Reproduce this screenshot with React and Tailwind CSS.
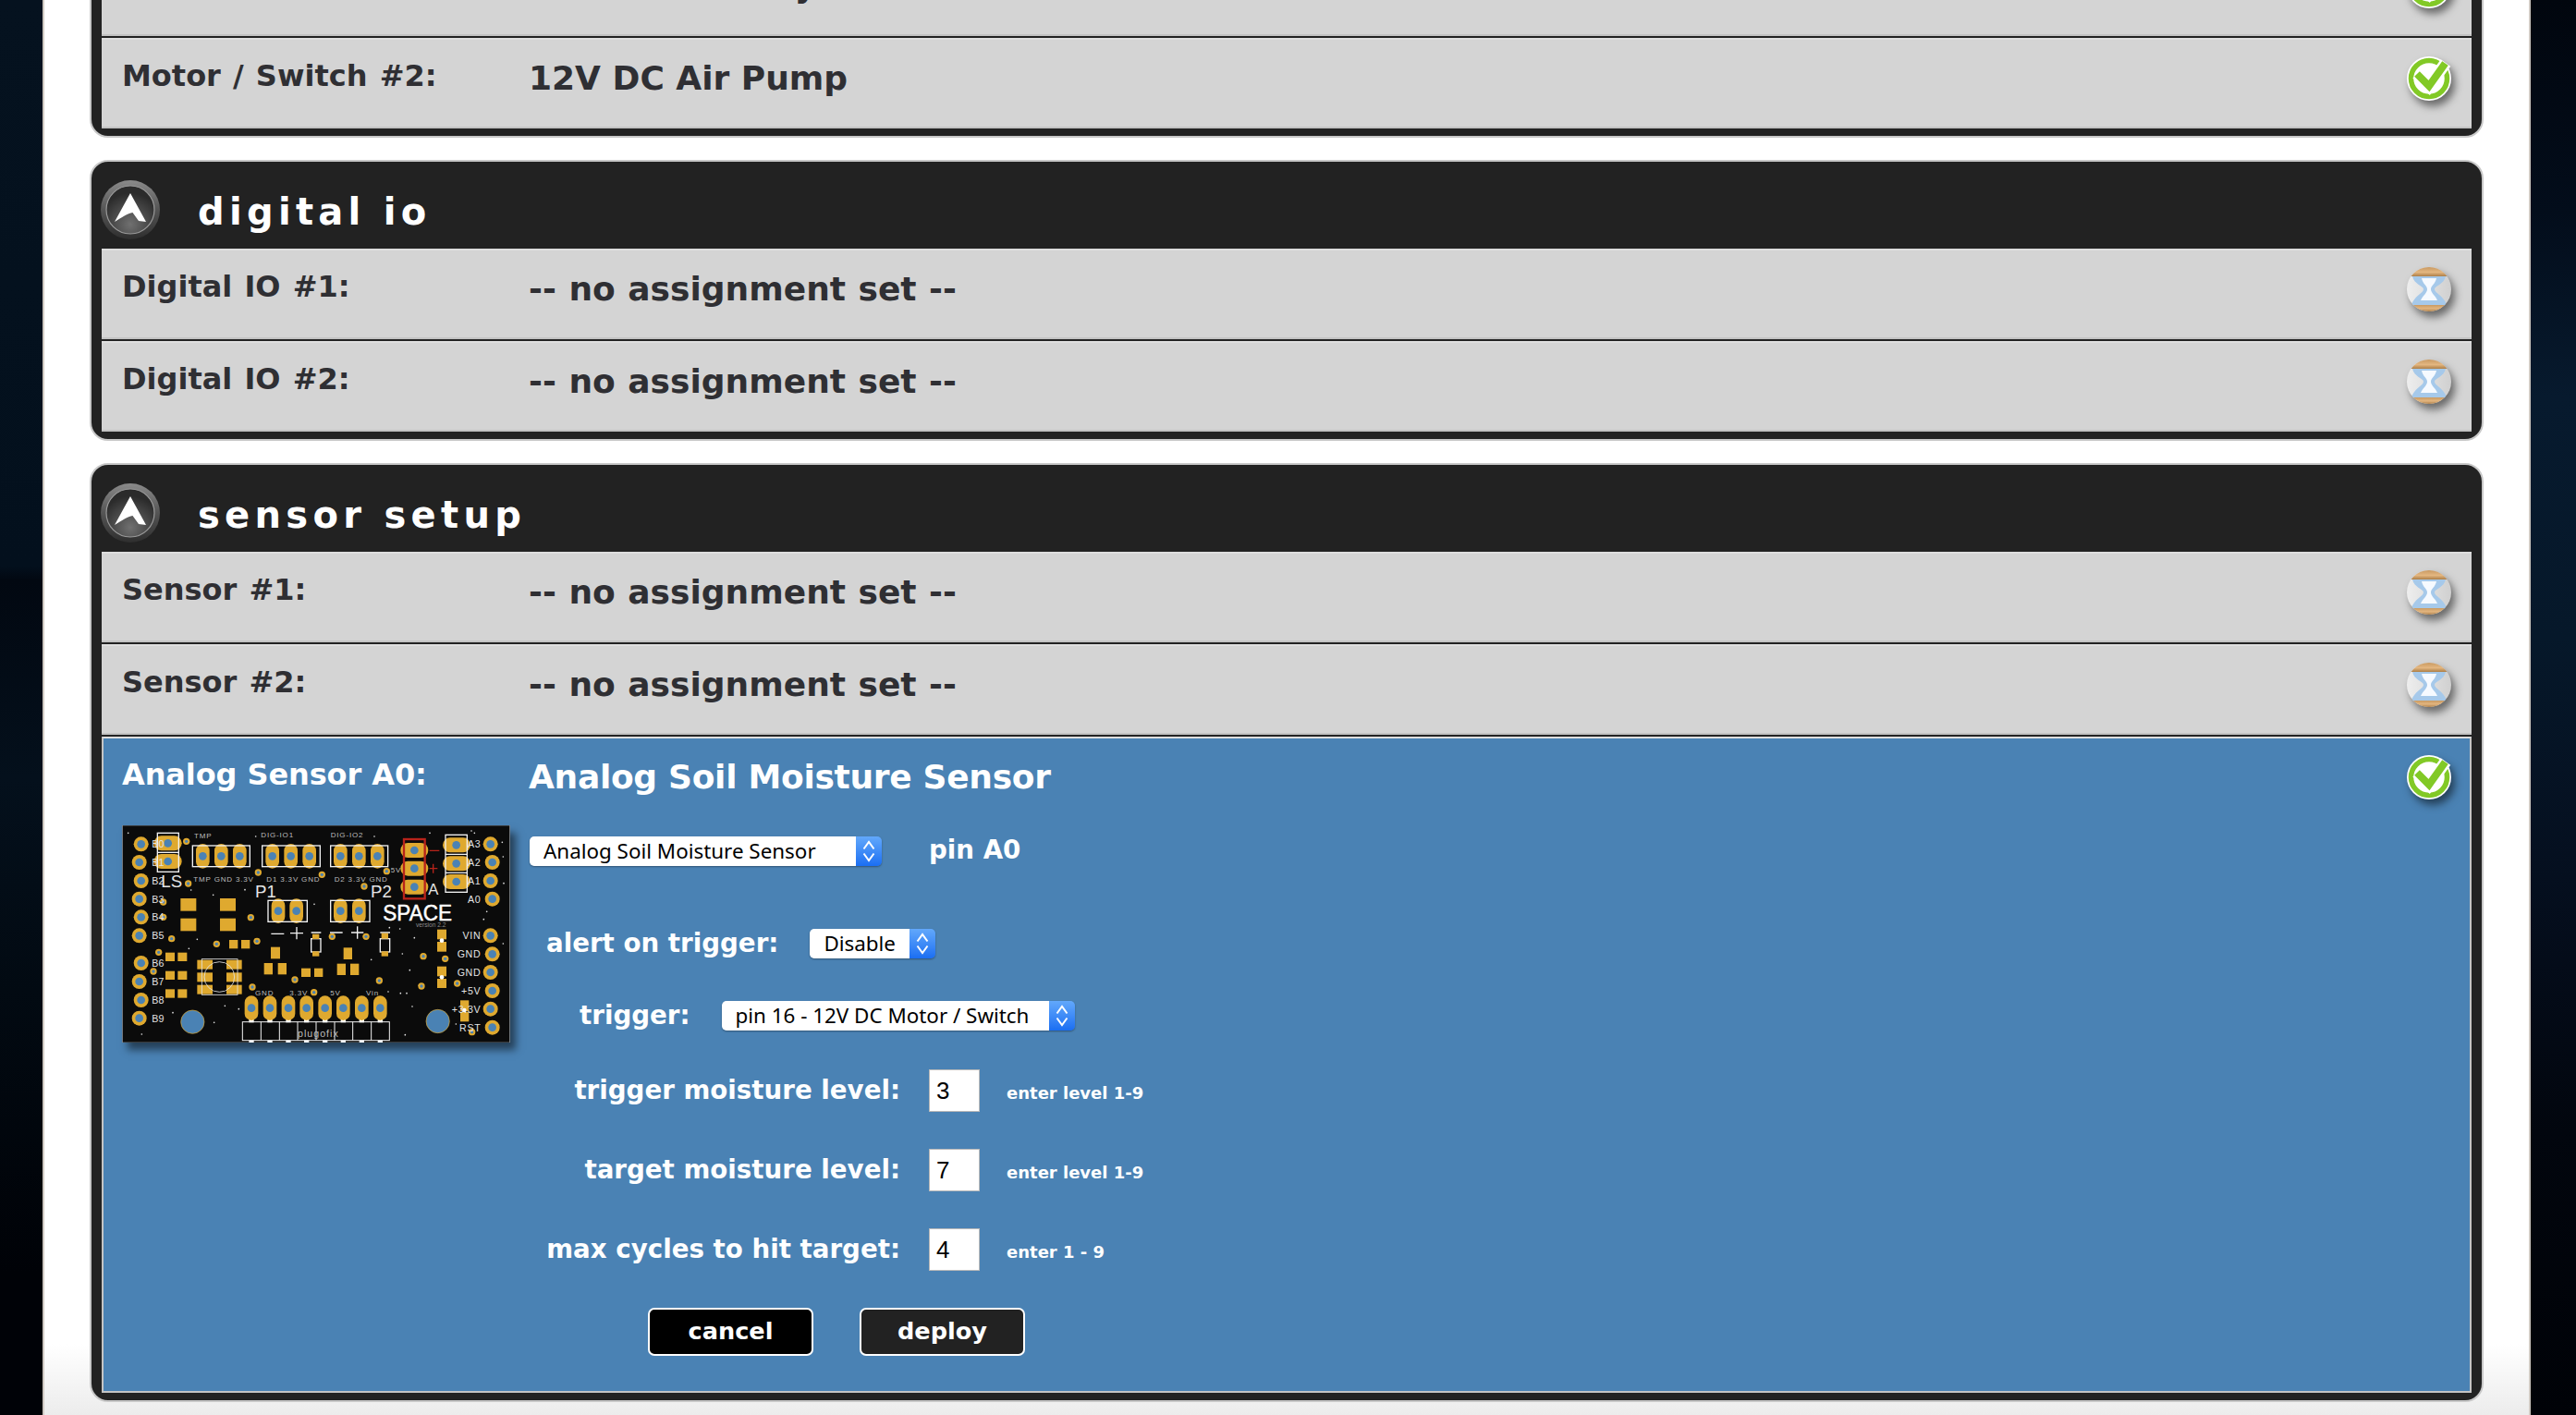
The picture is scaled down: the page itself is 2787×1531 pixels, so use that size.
import React from 'react';

const font = "font-['DejaVu_Sans','Liberation_Sans',sans-serif]";

const LogoBadge = () => (
    <svg width="64" height="64" viewBox="0 0 64 64" className="shrink-0">
        <defs>
            <radialGradient id="badgeFill" cx="50%" cy="80%" r="65%">
                <stop offset="0%" stopColor="#707070" />
                <stop offset="100%" stopColor="#2b2b2b" />
            </radialGradient>
            <linearGradient id="badgeRim" x1="0" y1="0" x2="0" y2="1">
                <stop offset="0%" stopColor="#8a8a8a" />
                <stop offset="50%" stopColor="#555555" />
                <stop offset="100%" stopColor="#2e2e2e" />
            </linearGradient>
        </defs>
        <circle cx="32" cy="32" r="32" fill="url(#badgeRim)" />
        <circle cx="32" cy="32" r="26" fill="url(#badgeFill)" stroke="#9a9a9a" strokeWidth="1.2" />
        <path d="M32 14 L49 45 L41 44 L34.500 35 C29 36 23 40 15 45 Z" fill="#ffffff" />
    </svg>
);

const CheckIcon = () => (
    <svg width="48" height="48" viewBox="0 0 48 48" className="drop-shadow-[4px_6px_4px_rgba(0,0,0,0.5)]">
        <circle cx="24" cy="24" r="24" fill="#ffffff" />
        <circle cx="24" cy="24" r="19.500" fill="none" stroke="#82c926" strokeWidth="5.500" />
        <path d="M11 19 L24 32 L42 7" fill="none" stroke="#ffffff" strokeWidth="13" />
        <path d="M11 19 L24 32 L41.500 7.500" fill="none" stroke="#82c926" strokeWidth="8" />
    </svg>
);

const HourglassIcon = () => (
    <svg width="48" height="48" viewBox="0 0 48 48" className="drop-shadow-[4px_6px_4px_rgba(0,0,0,0.5)]">
        <defs>
            <clipPath id="hourClip">
                <circle cx="24" cy="24" r="24" />
            </clipPath>
            <linearGradient id="sandCap" x1="0" y1="0" x2="0" y2="1">
                <stop offset="0%" stopColor="#c99a62" />
                <stop offset="55%" stopColor="#e3b680" />
                <stop offset="100%" stopColor="#ad7f48" />
            </linearGradient>
            <linearGradient id="glassSides" x1="0" y1="0" x2="1" y2="0">
                <stop offset="0%" stopColor="#eeeeee" />
                <stop offset="100%" stopColor="#d0d0d0" />
            </linearGradient>
        </defs>
        <g clipPath="url(#hourClip)">
            <rect width="48" height="48" fill="url(#glassSides)" />
            <path d="M6 10 H42 C40 19 30 20 30 24 C30 28 40 31 43 41 H5 C8 31 18 28 18 24 C18 20 8 19 6 10 Z" fill="#a6c9ea" />
            <path d="M16 12 H32 C31 18 26 20 26 24 C26 28 31 31 33 36 H15 C17 31 22 28 22 24 C22 20 17 18 16 12 Z" fill="#f6faff" />
            <rect width="48" height="10" fill="url(#sandCap)" />
            <rect y="41" width="48" height="7" fill="url(#sandCap)" />
        </g>
    </svg>
);

const Row = ({ label, value, done }) => (
    <div className="h-[98px] bg-[#d4d4d4] border-t-2 border-b-2 border-t-[#dedede] border-b-[#c2c2c2] flex items-start relative">
        <div className={`w-[461px] pl-[22px] pt-[15px] text-[32px] leading-[48px] font-bold text-[#2f2f33] [word-spacing:2px] ${font}`}>{label}</div>
        <div className={`ml-[1px] pt-[18px] text-[36px] leading-[48px] font-bold text-[#2f2f33] ${done ? '' : '[word-spacing:1px]'} ${font}`}>{value}</div>
        <div className="absolute right-[22px] top-[18px]">{done ? <CheckIcon /> : <HourglassIcon />}</div>
    </div>
);

const Panel = ({ title, children, className }) => (
    <div className={`border-2 border-[#c8c8c8] rounded-[20px] bg-[#222222] px-[11px] pb-[8px] ${className}`}>
        {title && (
            <div className="h-[94px] flex items-center -ml-[1px]">
                <div className="mt-[10px]"><LogoBadge /></div>
                <span className={`ml-[41px] mt-[14px] text-[40px] font-bold tracking-[5.3px] text-white ${font}`}>{title}</span>
            </div>
        )}
        <div className="flex flex-col gap-[2px]">{children}</div>
    </div>
);

const Select = ({ label, width }) => (
    <div className={`h-[32px] flex rounded-[5px] overflow-hidden shadow-[0_1px_2px_rgba(0,0,0,0.35)] ${width}`}>
        <div className="flex-1 bg-white pl-[15px] text-[22.4px] leading-[31px] text-black font-['Noto_Sans',sans-serif] whitespace-nowrap">{label}</div>
        <div className="w-[28px] bg-gradient-to-b from-[#62a8fb] to-[#1a6ef2] flex items-center justify-center">
            <svg width="14" height="24" viewBox="0 0 14 24" fill="none" stroke="#ffffff" strokeWidth="2">
                <path d="M1.500 9.500 L7 2 L12.500 9.500" />
                <path d="M1.500 14.500 L7 22 L12.500 14.500" />
            </svg>
        </div>
    </div>
);

const LevelField = ({ label, value, hint }) => (
    <div className="flex items-center h-[46px]">
        <div className={`w-[403px] text-right text-[27.7px] font-bold text-white whitespace-nowrap ${font}`}>{label}</div>
        <div className="ml-[31px] w-[55px] h-[46px] bg-white border border-[#b9b9b9] pl-[7px] text-[26px] leading-[44px] text-black font-['Liberation_Sans',sans-serif]">{value}</div>
        <div className={`ml-[29px] mt-[4px] text-[18px] font-bold text-white ${font}`}>{hint}</div>
    </div>
);

// board artwork, coordinates follow the photo of the board
const Pad = ({ x, y, r = 22, hole = 13 }) => (
    <g>
        <circle cx={x} cy={y} r={r} fill="#dfa92f" />
        <circle cx={x} cy={y} r={hole} fill="#4a82b4" />
    </g>
);

const Oval = ({ x, y }) => (
    <g>
        <rect x={x - 22} y={y - 40} width="44" height="80" rx="22" fill="#dfa92f" />
        <circle cx={x} cy={y} r="13" fill="#4a82b4" />
    </g>
);

const Smd = ({ x, y, w = 28, h = 28 }) => <rect x={x} y={y} width={w} height={h} fill="#dfa92f" />;

const silk = { fill: '#e4e4e4', fontFamily: "'Liberation Sans', sans-serif" };
const smallSilk = { fill: '#bdbdbd', fontFamily: "'Liberation Sans', sans-serif", fontSize: 24, letterSpacing: 2.5 };

const BoardImage = () => {
    const leftPads = [[128, 341], [122, 400], [128, 460], [122, 519], [128, 578], [122, 638], [128, 727], [122, 787], [128, 847], [122, 906]];
    const leftLabels = [['B0', 341], ['B1', 400], ['B2', 460], ['B3', 519], ['B4', 578], ['B5', 638], ['B6', 727], ['B7', 787], ['B8', 847], ['B9', 906]];
    const rightPads = [[1262, 341], [1268, 400], [1262, 460], [1268, 519], [1262, 638], [1268, 698], [1262, 757], [1268, 817], [1262, 876], [1268, 936]];
    const rightLabels = [['A3', 341], ['A2', 400], ['A1', 460], ['A0', 519], ['VIN', 638], ['GND', 698], ['GND', 757], ['+5V', 817], ['+3.3V', 876], ['RST', 936]];
    const vias = [[275, 332], [281, 469], [200, 529], [200, 578], [484, 579], [227, 648], [373, 665], [504, 656], [185, 692], [168, 754], [489, 805], [627, 781], [689, 822], [748, 641], [858, 641], [901, 784], [1038, 802], [1044, 705], [1115, 713], [1154, 793], [1202, 951], [508, 433], [715, 440], [852, 478], [925, 429]];
    const headerPads = [328, 388, 448, 554, 614, 674, 775, 835, 895];
    const bottomPads = [486, 546, 606, 665, 725, 784, 844, 904];
    const stars = [[86, 305], [130, 958], [231, 888], [365, 920], [400, 866], [445, 876], [970, 825], [990, 825], [1008, 868], [1030, 800], [985, 960], [1150, 925], [1300, 335], [1303, 382], [1305, 468], [1303, 664], [1065, 305], [1200, 298], [1210, 305], [1240, 585], [1250, 560], [690, 536], [930, 820], [875, 716], [1000, 750], [976, 697], [1015, 645], [934, 612], [968, 616], [465, 489], [500, 316], [885, 316], [362, 506], [290, 490], [310, 650], [283, 680]];

    return (
        <svg width="420" height="235" viewBox="67 280 1258 705" className="shrink-0 shadow-[6px_8px_8px_rgba(0,0,0,0.5)]">
            <rect x="67" y="280" width="1258" height="705" fill="#0b0b0b" stroke="#9a9a9a" strokeWidth="2" />
            {stars.map(([x, y], i) => <circle key={i} cx={x} cy={y} r="2.500" fill="#e8e8e8" />)}
            {leftPads.map(([x, y], i) => <Pad key={i} x={x} y={y} r={24} />)}
            {rightPads.map(([x, y], i) => <Pad key={i} x={x} y={y} r={24} />)}
            {vias.map(([x, y], i) => <Pad key={i} x={x} y={y} r={11} hole={5} />)}
            {headerPads.map(x => <Oval key={x} x={x} y={380} />)}
            {[573, 632, 775, 835].map(x => <Oval key={x} x={x} y={558} />)}
            {bottomPads.map(x => (
                <g key={x}>
                    <rect x={x - 8} y="890" width="16" height="30" fill="#ffffff" />
                    <rect x={x - 8} y="978" width="16" height="8" fill="#ffffff" />
                    <Oval x={x} y={873} />
                </g>
            ))}
            {[338, 397].map(y => (
                <g key={y}>
                    <rect x="170" y={y - 24} width="90" height="48" rx="24" fill="#dfa92f" />
                    <circle cx="215" cy={y} r="13" fill="#4a82b4" />
                </g>
            ))}
            {[361, 420, 480].map(y => (
                <g key={y}>
                    <rect x="970" y={y - 24} width="90" height="48" rx="24" fill="#dfa92f" />
                    <circle cx="1015" cy={y} r="13" fill="#4a82b4" />
                </g>
            ))}
            {[344, 404, 463].map(y => (
                <g key={y}>
                    <rect x="1107" y={y - 24} width="90" height="48" rx="24" fill="#dfa92f" />
                    <circle cx="1151" cy={y} r="13" fill="#4a82b4" />
                </g>
            ))}

            <g fill="none" stroke="#f2f2f2" strokeWidth="4">
                <rect x="181" y="305" width="69" height="126" />
                <path d="M181 368 H250" />
                <rect x="295" y="346" width="186" height="68" />
                <rect x="521" y="346" width="188" height="68" />
                <rect x="743" y="346" width="186" height="68" />
                <rect x="1116" y="311" width="70" height="186" />
                <path d="M1116 374 H1186 M1116 434 H1186" />
                <rect x="540" y="524" width="127" height="69" />
                <rect x="743" y="524" width="127" height="69" />
                <path d="M550 632 H592 M612 630 H654 M633 610 V650 M680 628 H712 M741 628 H782 M810 628 H850 M830 608 V648 M904 628 H936" />
                <rect x="680" y="648" width="31" height="43" />
                <rect x="904" y="648" width="31" height="43" />
                <rect x="457" y="918" width="477" height="60" strokeWidth="3" />
                <path d="M517 918 V978 M577 918 V978 M636 918 V978 M696 918 V978 M756 918 V978 M815 918 V978 M875 918 V978" strokeWidth="3" />
            </g>
            <rect x="981" y="325" width="68" height="193" fill="none" stroke="#b8231a" strokeWidth="7" />
            <path d="M1064 362 H1096 M1064 420 H1090 M1076 405 V435" stroke="#b8231a" strokeWidth="4" fill="none" />

            <g fill="#dfa92f">
                <Smd x={256} y={517} w={51} h={41} />
                <Smd x={256} y={582} w={51} h={41} />
                <Smd x={384} y={517} w={51} h={41} />
                <Smd x={384} y={582} w={51} h={41} />
                <Smd x={414} y={652} />
                <Smd x={453} y={652} />
                <Smd x={549} y={675} w={30} h={38} />
                <Smd x={527} y={727} w={28} h={37} />
                <Smd x={572} y={727} w={28} h={37} />
                <Smd x={648} y={744} w={30} h={28} />
                <Smd x={690} y={744} w={28} h={28} />
                <Smd x={785} y={677} w={28} h={38} />
                <Smd x={764} y={729} w={28} h={37} />
                <Smd x={807} y={729} w={28} h={37} />
                <Smd x={207} y={693} w={30} h={28} />
                <Smd x={247} y={693} w={30} h={28} />
                <Smd x={207} y={753} w={30} h={28} />
                <Smd x={247} y={753} w={30} h={28} />
                <Smd x={207} y={812} w={30} h={28} />
                <Smd x={247} y={812} w={30} h={28} />
                <Smd x={1089} y={618} w={30} h={32} />
                <Smd x={1089} y={658} w={30} h={32} />
                <Smd x={1089} y={738} w={30} h={32} />
                <Smd x={1089} y={778} w={30} h={30} />
                <Smd x={1164} y={848} w={28} h={35} />
                <Smd x={1164} y={885} w={28} h={32} />
                <Smd x={684} y={633} w={22} h={16} />
                <Smd x={684} y={689} w={22} h={16} />
                <Smd x={908} y={630} w={22} h={18} />
                <Smd x={908} y={689} w={22} h={16} />
                <Smd x={310} y={717} w={50} h={30} />
                <Smd x={310} y={758} w={50} h={30} />
                <Smd x={310} y={798} w={50} h={30} />
                <Smd x={405} y={717} w={50} h={30} />
                <Smd x={405} y={758} w={50} h={30} />
                <Smd x={405} y={798} w={50} h={30} />
            </g>
            <g fill="none" stroke="#e4e4e4" strokeWidth="2.500">
                <rect x="325" y="714" width="116" height="116" />
                <circle cx="382" cy="772" r="49" />
            </g>
            <rect x="360" y="728" width="44" height="88" rx="6" fill="#0b0b0b" />
            <circle cx="1104" cy="654" r="7" fill="#ffffff" />
            <circle cx="1104" cy="773" r="7" fill="#ffffff" />
            <circle cx="1177" cy="880" r="7" fill="#ffffff" />
            <circle cx="295" cy="918" r="38" fill="#4a82b4" stroke="#dfa92f" strokeWidth="2" />
            <circle cx="1091" cy="916" r="38" fill="#4a82b4" stroke="#dfa92f" strokeWidth="2" />

            {leftLabels.map(([t, y]) => <text key={y} x="163" y={y + 12} fontSize="32" {...silk}>{t}</text>)}
            {rightLabels.map(([t, y]) => <text key={y} x="1231" y={y + 12} fontSize="32" letterSpacing="2" textAnchor="end" {...silk}>{t}</text>)}
            <text x="193" y="482" fontSize="56" {...silk}>LS</text>
            <text x="498" y="514" fontSize="56" {...silk}>P1</text>
            <text x="873" y="514" fontSize="56" {...silk}>P2</text>
            <text x="1060" y="505" fontSize="50" {...silk}>A</text>
            <text x="913" y="590" fontSize="74" textLength="224" lengthAdjust="spacingAndGlyphs" stroke="#ffffff" strokeWidth="1.500" {...silk} fill="#ffffff">SPACE</text>
            <text x="1020" y="610" fontSize="20" {...silk} fill="#8a8a8a">version 2.2</text>
            <text x="300" y="322" {...smallSilk}>TMP</text>
            <text x="517" y="320" {...smallSilk}>DIG-IO1</text>
            <text x="743" y="320" {...smallSilk}>DIG-IO2</text>
            <text x="298" y="463" {...smallSilk}>TMP GND  3.3V</text>
            <text x="535" y="463" {...smallSilk}>D1  3.3V GND</text>
            <text x="755" y="463" {...smallSilk}>D2  3.3V GND</text>
            <text x="938" y="434" {...smallSilk}>5V</text>
            <text x="498" y="832" {...smallSilk}>GND</text>
            <text x="610" y="832" {...smallSilk}>3.3V</text>
            <text x="742" y="832" {...smallSilk}>5V</text>
            <text x="858" y="832" {...smallSilk}>Vin</text>
            <text x="636" y="966" fontSize="32" letterSpacing="3" {...silk} fill="#bdbdbd">plugofix</text>
        </svg>
    );
};

const ActionButton = ({ label, tone }) => (
    <button className={`w-[179px] h-[52px] rounded-[7px] border-2 border-white text-white text-[25.6px] font-bold leading-none ${tone} ${font}`}>{label}</button>
);

const SensorForm = () => (
    <div className="h-[710px] bg-[#4a82b4] border-2 border-x-[#c4c4c4] border-t-[#dedede] border-b-[#c4c4c4] relative">
        <div className="flex items-start">
            <div className="w-[459px] pl-[20px] pt-[15px]">
                <div className={`text-[32px] leading-[48px] font-bold text-white tracking-[-0.1px] ${font}`}>Analog Sensor A0:</div>
                <div className="mt-[31px]">
                    <BoardImage />
                </div>
            </div>
            <div className="flex-1 min-w-0">
                <div className={`ml-[1px] pt-[18px] text-[36px] leading-[48px] font-bold text-white tracking-[-0.3px] ${font}`}>Analog Soil Moisture Sensor</div>
                <div className="flex items-center mt-[40px] ml-[2px] h-[32px]">
                    <Select label="Analog Soil Moisture Sensor" width="w-[381px]" />
                    <span className={`ml-[51px] -mt-[2px] text-[27.7px] font-bold text-white ${font}`}>pin A0</span>
                </div>
                <div className="flex items-center mt-[68px] ml-[20px] h-[32px]">
                    <span className={`text-[27.7px] font-bold text-white ${font}`}>alert on trigger:</span>
                    <div className="ml-[34px]"><Select label="Disable" width="w-[136px]" /></div>
                </div>
                <div className="flex items-center mt-[46px] ml-[56px] h-[32px]">
                    <span className={`text-[27.7px] font-bold text-white ${font}`}>trigger:</span>
                    <div className="ml-[34px]"><Select label="pin 16 - 12V DC Motor / Switch" width="w-[382px]" /></div>
                </div>
                <div className="mt-[42px] flex flex-col gap-[40px]">
                    <LevelField label="trigger moisture level:" value="3" hint="enter level 1-9" />
                    <LevelField label="target moisture level:" value="7" hint="enter level 1-9" />
                    <LevelField label="max cycles to hit target:" value="4" hint="enter 1 - 9" />
                </div>
                <div className="flex gap-[50px] mt-[40px] ml-[130px]">
                    <ActionButton label="cancel" tone="bg-black" />
                    <ActionButton label="deploy" tone="bg-[#222222]" />
                </div>
            </div>
        </div>
        <div className="absolute right-[20px] top-[18px]"><CheckIcon /></div>
    </div>
);

const App = () => (
    <div className="h-[1531px] overflow-hidden flex bg-[#000207]">
        <div className="w-[46px] shrink-0 bg-[linear-gradient(to_bottom,#05121f_0%,#03101d_40%,#020811_41%,#04101c_55%,#020a12_70%,#000207_90%)]" />
        <div className="w-[2692px] shrink-0 h-full border-x-2 border-x-[#cfc9c2] bg-gradient-to-b from-white from-[95%] to-[#ececec] px-[49px] overflow-hidden">
            <div className="-mt-[61px]">
                <Panel>
                    <Row label="Motor / Switch #1:" value="12V DC Battery" done />
                    <Row label="Motor / Switch #2:" value="12V DC Air Pump" done />
                </Panel>
                <Panel title="digital io" className="mt-[24px]">
                    <Row label="Digital IO #1:" value="-- no assignment set --" />
                    <Row label="Digital IO #2:" value="-- no assignment set --" />
                </Panel>
                <Panel title="sensor setup" className="mt-[24px]">
                    <Row label="Sensor #1:" value="-- no assignment set --" />
                    <Row label="Sensor #2:" value="-- no assignment set --" />
                    <SensorForm />
                </Panel>
            </div>
        </div>
        <div className="flex-1 bg-[linear-gradient(to_bottom,#01060e_0%,#030d1b_15%,#071a2e_28%,#06182a_45%,#050f1f_62%,#02060e_80%,#000207_100%)]" />
    </div>
);

export default App;
